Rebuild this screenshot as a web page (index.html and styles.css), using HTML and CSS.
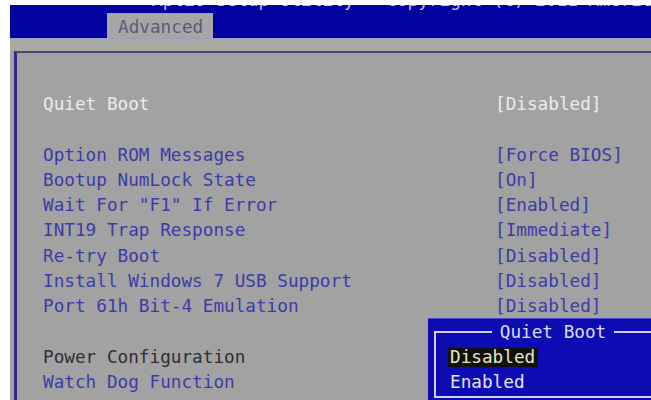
FILE: index.html
```html
<!DOCTYPE html>
<html lang="en">
<head>
<meta charset="utf-8">
<title>Aptio Setup Utility</title>
<link rel="stylesheet" href="styles.css">
</head>
<body>
<div class="screen">
  <header class="header">
    <div class="title"><span>Aptio Setup Utility - Copyright (C) 2011 American Megatrends, Inc.</span></div>
    <nav class="tabs">
      <span class="tab active">Advanced</span>
    </nav>
  </header>
  <div class="band"></div>
  <main class="panel">
    <div class="settings">
      <div class="row current"><span class="name">Quiet Boot</span><span class="value">[Disabled]</span></div>
      <div class="spacer"></div>
      <div class="row"><span class="name">Option ROM Messages</span><span class="value">[Force BIOS]</span></div>
      <div class="row"><span class="name">Bootup NumLock State</span><span class="value">[On]</span></div>
      <div class="row"><span class="name">Wait For "F1" If Error</span><span class="value">[Enabled]</span></div>
      <div class="row"><span class="name">INT19 Trap Response</span><span class="value">[Immediate]</span></div>
      <div class="row"><span class="name">Re-try Boot</span><span class="value">[Disabled]</span></div>
      <div class="row"><span class="name">Install Windows 7 USB Support</span><span class="value">[Disabled]</span></div>
      <div class="row"><span class="name">Port 61h Bit-4 Emulation</span><span class="value">[Disabled]</span></div>
      <div class="spacer"></div>
      <div class="row heading"><span class="name">Power Configuration</span></div>
      <div class="row"><span class="name">Watch Dog Function</span><span class="value">[Disabled]</span></div>
      <div class="row"><span class="name">Power Button Function</span><span class="value">[Instant Off]</span></div>
    </div>
  </main>
  <div class="popup">
    <fieldset class="frame">
      <legend>Quiet Boot</legend>
      <div class="option selected"><span>Disabled</span></div>
      <div class="option"><span>Enabled</span></div>
    </fieldset>
  </div>
</div>
</body>
</html>
```
FILE: styles.css
```css
html, body {
  margin: 0;
  padding: 0;
  background: #ffffff;
  overflow: hidden;
}

body {
  font-family: "DejaVu Sans Mono", "Liberation Mono", monospace;
  font-size: 17.7px;
  padding-top: 5px;
}

.screen {
  position: relative;
  margin-left: 10px;
  height: 395px;
  overflow: hidden;
  background: #a3a3a1;
}

/* top bar */
.header {
  background: #0303a2;
  height: 33px;
  display: flex;
  flex-direction: column;
}

.title {
  height: 8px;
  overflow: hidden;
  padding-left: 142px;
  color: #c4c4e6;
  white-space: nowrap;
}

.title span {
  display: block;
  line-height: 20px;
  margin-top: -15px;
}

.tabs {
  flex: 1;
  display: flex;
  align-items: flex-end;
  padding-left: 97px;
}

.tab {
  height: 25px;
  line-height: 28px;
  padding: 0 10px 0 11px;
  color: #5a5a78;
}

.tab.active {
  background: #a6a6a4;
}

.band {
  height: 12px;
  background: #a9aaa1;
  border-top: 1px solid #9e9ec8;
}

/* main settings panel */
.panel {
  margin-left: 4px;
  border-top: 2px solid #4a4a70;
  border-left: 3px solid #2a2a90;
  padding: 39px 0 0 26px;
  height: 400px;
  background: #a2a2a2;
}

.settings {
  display: flex;
  flex-direction: column;
}

.row {
  display: grid;
  grid-template-columns: 452px 1fr;
  height: 25.3px;
  line-height: 25.3px;
  color: #3c3ca6;
  white-space: nowrap;
}

.spacer {
  height: 25.3px;
}

.row.current {
  color: #ececec;
}

.row.heading {
  color: #2e2e34;
}

/* option pop-up */
.popup {
  position: absolute;
  left: 418px;
  top: 313px;
  width: 226px;
  height: 100px;
  padding: 0 6px;
  background: #0c0cb2;
  border-top: 1px solid #4a4ad0;
}

.frame {
  margin: 0;
  padding: 0 0 0 12px;
  border: 2px solid #d2d2f0;
  min-width: 0;
}

.frame legend {
  margin: 0 auto;
  padding: 0 8px;
  line-height: 26px;
  color: #dcdcf6;
}

.option {
  height: 25.3px;
  display: flex;
  align-items: center;
  color: #e4e4f4;
}

.option span {
  line-height: 19px;
  padding: 0 3px 0 2px;
}

.option.selected span {
  background: #101010;
  color: #e8e6c4;
}
```
